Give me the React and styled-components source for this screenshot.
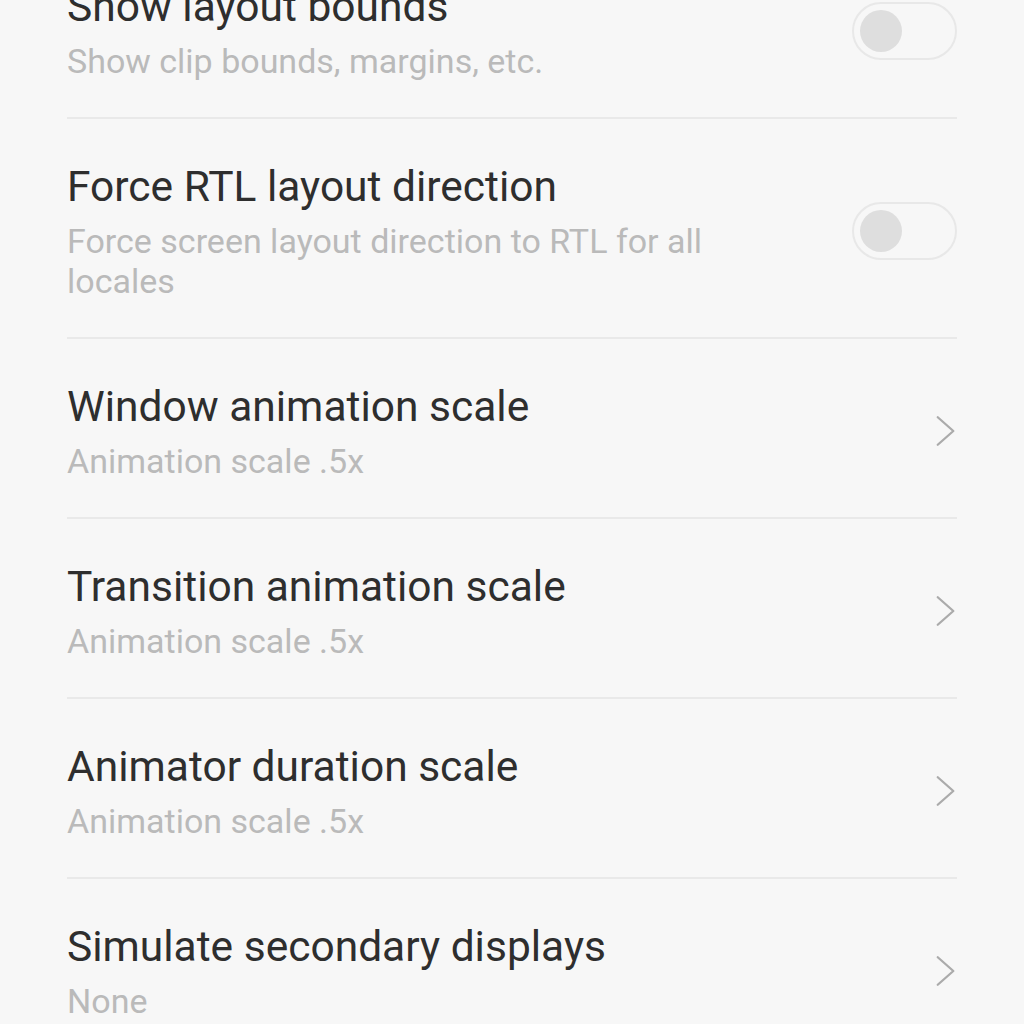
import React from "react";
import styled, { createGlobalStyle } from "styled-components";

const GlobalStyle = createGlobalStyle`
  html, body {
    margin: 0;
    padding: 0;
    background: #f7f7f7;
    overflow: hidden;
  }
  body {
    font-family: "Roboto", "Noto Sans", sans-serif;
  }
`;

const items = [
  { title: "Show layout bounds", summary: "Show clip bounds, margins, etc.", kind: "switch" },
  { title: "Force RTL layout direction", summary: "Force screen layout direction to RTL for all locales", kind: "switch" },
  { title: "Window animation scale", summary: "Animation scale .5x", kind: "arrow" },
  { title: "Transition animation scale", summary: "Animation scale .5x", kind: "arrow" },
  { title: "Animator duration scale", summary: "Animation scale .5x", kind: "arrow" },
  { title: "Simulate secondary displays", summary: "None", kind: "arrow" },
];

const App = () => {
  return (
    <>
      <GlobalStyle />
      <Screen>
        <List>
          {items.map((item) => (
            <Row key={item.title}>
              <TextBlock>
                <Title>{item.title}</Title>
                <Summary>{item.summary}</Summary>
              </TextBlock>
              {item.kind === "switch" ? (
                <Switch>
                  <Knob />
                </Switch>
              ) : (
                <Chevron viewBox="0 0 24 36">
                  <path d="M3 3 L20 18 L3 33" />
                </Chevron>
              )}
            </Row>
          ))}
        </List>
      </Screen>
    </>
  );
};

const Screen = styled.div`
  width: 1024px;
  height: 1024px;
  overflow: hidden;
  background: #f7f7f7;
`;

// list is scrolled so the first row is partly hidden
const List = styled.div`
  margin-top: -61px;
  display: flex;
  flex-direction: column;
`;

const Row = styled.div`
  display: flex;
  align-items: center;
  gap: 60px;
  margin: 0 67px;
  padding: 42px 0 36px;
  border-bottom: 2px solid #e9e9e9;
`;

const TextBlock = styled.div`
  flex: 1;
  min-width: 0;
`;

const Title = styled.div`
  font-size: 42.5px;
  line-height: 52px;
  color: #2e2e2e;
`;

const Summary = styled.div`
  margin-top: 8px;
  font-size: 34px;
  line-height: 40px;
  color: #bababa;
`;

const Switch = styled.div`
  flex-shrink: 0;
  width: 105px;
  height: 58px;
  box-sizing: border-box;
  border: 2px solid #e8e8e8;
  border-radius: 29px;
  display: flex;
  align-items: center;
  padding-left: 6px;
`;

const Knob = styled.div`
  width: 42px;
  height: 42px;
  border-radius: 50%;
  background: #dedede;
`;

const Chevron = styled.svg`
  flex-shrink: 0;
  width: 22px;
  height: 34px;
  fill: none;
  stroke: #ababab;
  stroke-width: 2.5;
  stroke-linecap: round;
  stroke-linejoin: round;
`;

export default App;
